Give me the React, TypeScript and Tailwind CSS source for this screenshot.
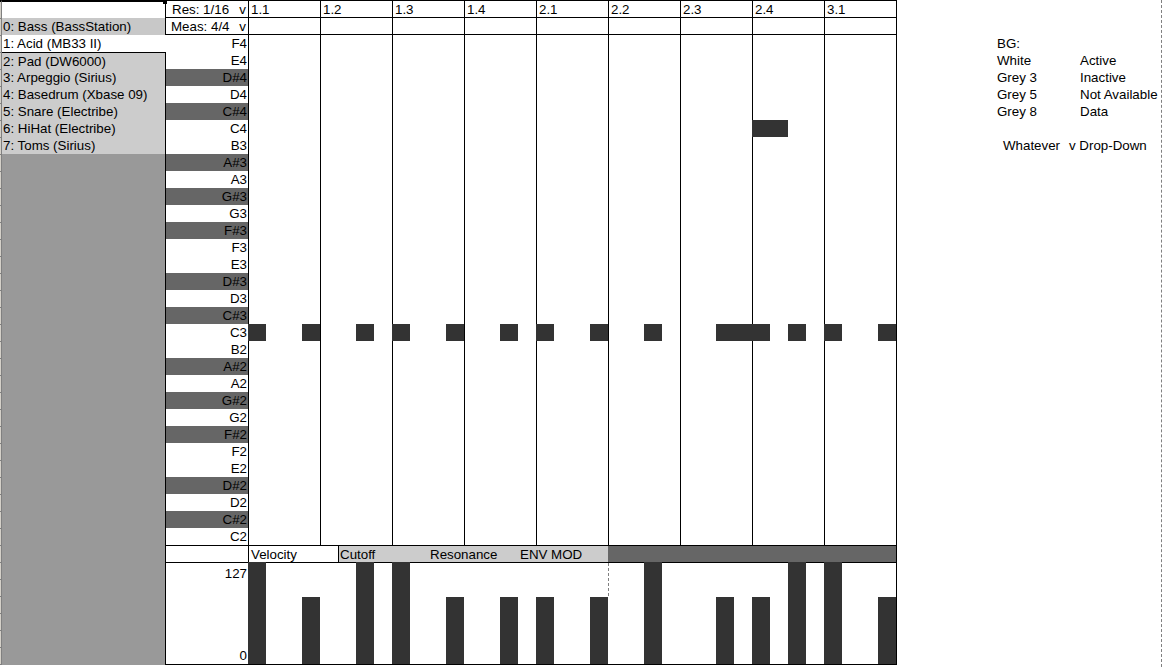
import React from 'react';

const keys = [
  'F4', 'E4', 'D#4', 'D4', 'C#4', 'C4', 'B3', 'A#3', 'A3', 'G#3', 'G3', 'F#3', 'F3', 'E3', 'D#3',
  'D3', 'C#3', 'C3', 'B2', 'A#2', 'A2', 'G#2', 'G2', 'F#2', 'F2', 'E2', 'D#2', 'D2', 'C#2', 'C2',
];

const tracks = [
  '2: Pad (DW6000)',
  '3: Arpeggio (Sirius)',
  '4: Basedrum (Xbase 09)',
  '5: Snare (Electribe)',
  '6: HiHat (Electribe)',
  '7: Toms (Sirius)',
];

const beats = ['1.1', '1.2', '1.3', '1.4', '2.1', '2.2', '2.3', '2.4', '3.1'];

// row = index into keys, step = 1/16 step (18px)
const notes = [
  { row: 5, step: 28, len: 2 },
  ...[0, 3, 6, 8, 11, 14, 16, 19, 22].map((step) => ({ row: 17, step, len: 1 })),
  { row: 17, step: 26, len: 2 },
  { row: 17, step: 28, len: 1 },
  { row: 17, step: 30, len: 1 },
  { row: 17, step: 32, len: 1 },
  { row: 17, step: 35, len: 1 },
];

const velocities = [
  { step: 0, full: true },
  { step: 3, full: false },
  { step: 6, full: true },
  { step: 8, full: true },
  { step: 11, full: false },
  { step: 14, full: false },
  { step: 16, full: false },
  { step: 19, full: false },
  { step: 22, full: true },
  { step: 26, full: false },
  { step: 28, full: false },
  { step: 30, full: true },
  { step: 32, full: true },
  { step: 35, full: false },
];

const legend = [
  ['White', 'Active'],
  ['Grey 3', 'Inactive'],
  ['Grey 5', 'Not Available'],
  ['Grey 8', 'Data'],
];

function GridCells({ className = '' }: { className?: string }) {
  return (
    <>
      {beats.map((b, i) => (
        <div
          key={b}
          className={`w-[72px] shrink-0 border-l border-black ${i === beats.length - 1 ? 'w-[73px] border-r' : ''} ${className}`}
        />
      ))}
    </>
  );
}

export default function App() {
  return (
    <div className="relative flex w-[1164px] h-[667px] overflow-hidden bg-white text-black text-[13.33px] leading-[17px] font-['Liberation_Sans',Arial,sans-serif]">
      {/* row header stub */}
      <div className="flex flex-col w-[2px] h-[665px] bg-[#d4d0c8] border-r border-[#808080] border-t-2 border-t-black">
        {Array.from({ length: 40 }).map((_, i) => (
          <div key={i} className="h-[17px] shrink-0 border-b border-[#808080]" />
        ))}
      </div>

      {/* track list */}
      <div className="relative flex flex-col w-[163px] h-[665px]">
        <div className="h-[18px] border-t-2 border-black bg-white" />
        <div className="absolute left-[161px] top-0 w-[4px] h-[4px] bg-black" />
        <div className="h-[17px] bg-[#c8c8c8] pl-[1px] whitespace-nowrap">0: Bass (BassStation)</div>
        <div className="h-[17px] bg-white pl-[1px] whitespace-nowrap">1: Acid (MB33 II)</div>
        <div className="border-t border-black bg-[#cccccc]">
          {tracks.map((t, i) => (
            <div key={t} className={`${i === 0 ? 'h-[16px]' : 'h-[17px]'} pl-[1px] whitespace-nowrap`}>
              {t}
            </div>
          ))}
        </div>
        <div className="flex-1 bg-[#999999] border-b border-[#999999]" />
      </div>

      {/* keys column */}
      <div className="flex flex-col w-[83px] h-[665px]">
        <div className="flex justify-between h-[18px] border-t border-b border-l border-black pl-[6px] pr-[2px]">
          <span>Res: 1/16</span>
          <span>v</span>
        </div>
        <div className="flex justify-between h-[17px] border-b border-l border-black pl-[5px] pr-[2px]">
          <span>Meas: 4/4</span>
          <span>v</span>
        </div>
        {keys.map((k, i) => (
          <div
            key={k}
            className={`h-[17px] text-right pr-[1px] border-l ${i === 0 ? 'border-white' : 'border-black'} ${k.includes('#') ? 'bg-[#666666]' : 'bg-white'}`}
          >
            {k}
          </div>
        ))}
        <div className="h-[17px] border-t border-l border-black" />
        <div className="flex flex-col justify-between flex-1 border-t border-b border-l border-black text-right pr-[1px] pt-[2px]">
          <span>127</span>
          <span>0</span>
        </div>
      </div>

      {/* piano roll grid */}
      <div className="flex flex-col w-[649px] h-[665px]">
        <div className="flex h-[18px] border-t border-b border-black">
          {beats.map((b, i) => (
            <div
              key={b}
              className={`w-[72px] shrink-0 border-l border-black pl-[2px] ${i === beats.length - 1 ? 'w-[73px] border-r' : ''}`}
            >
              {b}
            </div>
          ))}
        </div>
        <div className="flex h-[17px] border-b border-black">
          <GridCells />
        </div>
        <div className="relative flex h-[510px]">
          <GridCells className="h-full" />
          {notes.map((n, i) => (
            <div
              key={i}
              className="absolute h-[17px] bg-[#333333]"
              style={{ left: n.step * 18, top: n.row * 17, width: n.len * 18 }}
            />
          ))}
        </div>

        {/* parameter tabs */}
        <div className="flex h-[17px] border-t border-black">
          <div className="w-[90px] shrink-0 border-l border-black pl-[2px] bg-white">Velocity</div>
          <div className="flex w-[270px] shrink-0 border-l border-black bg-[#cccccc]">
            <div className="w-[89px] pl-[1px]">Cutoff</div>
            <div className="w-[90px] pl-[2px]">Resonance</div>
            <div className="w-[90px] pl-[2px]">ENV MOD</div>
          </div>
          <div className="flex-1 bg-[#666666] border-r border-black" />
        </div>

        {/* velocity lane */}
        <div className="relative flex-1 border border-black">
          <div className="absolute left-[359px] top-0 h-[33px] border-l border-dashed border-[#808080]" />
          {velocities.map((v) => (
            <div
              key={v.step}
              className="absolute bottom-0 w-[18px] bg-[#333333]"
              style={{ left: v.step * 18 - 1, height: v.full ? 102 : 67 }}
            />
          ))}
        </div>
      </div>

      {/* legend */}
      <div className="flex flex-col w-[164px] ml-[100px] pt-[35px] whitespace-nowrap">
        <div className="h-[17px]">BG:</div>
        {legend.map(([c, d]) => (
          <div key={c} className="flex h-[17px]">
            <span className="w-[83px]">{c}</span>
            <span>{d}</span>
          </div>
        ))}
        <div className="h-[17px]" />
        <div className="flex h-[17px]">
          <span className="w-[72px] pl-[6px]">Whatever</span>
          <span>v Drop-Down</span>
        </div>
      </div>

      {/* page break */}
      <div className="h-[667px] border-l border-dashed border-[#808080]" />
    </div>
  );
}
